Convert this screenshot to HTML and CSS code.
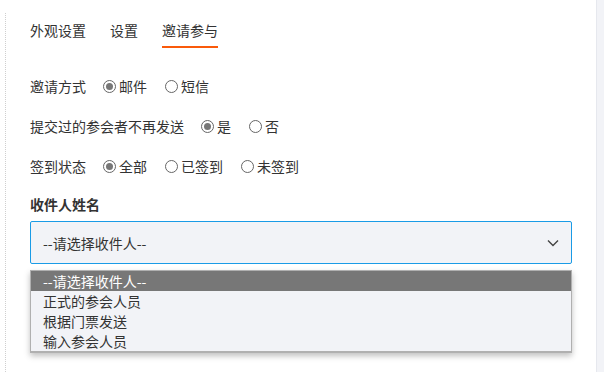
FILE: index.html
```html
<!DOCTYPE html>
<html lang="zh">
<head>
<meta charset="utf-8">
<link rel="stylesheet" href="styles.css">
</head>
<body>
<div class="main">
  <div class="tabs">
    <span class="tab">外观设置</span>
    <span class="tab">设置</span>
    <span class="tab active">邀请参与</span>
  </div>
  <div class="row">
    <span class="label">邀请方式</span>
    <span class="opt"><i class="radio on"></i>邮件</span>
    <span class="opt"><i class="radio"></i>短信</span>
  </div>
  <div class="row">
    <span class="label">提交过的参会者不再发送</span>
    <span class="opt"><i class="radio on"></i>是</span>
    <span class="opt"><i class="radio"></i>否</span>
  </div>
  <div class="row">
    <span class="label">签到状态</span>
    <span class="opt"><i class="radio on"></i>全部</span>
    <span class="opt"><i class="radio"></i>已签到</span>
    <span class="opt"><i class="radio"></i>未签到</span>
  </div>
  <div class="field-title">收件人姓名</div>
  <div class="select">
    <span>--请选择收件人--</span>
    <svg class="chev" width="12" height="8" viewBox="0 0 12 8"><path d="M1 1.5 L6 6.5 L11 1.5" fill="none" stroke="#444" stroke-width="1.4"/></svg>
  </div>
  <div class="list">
    <div class="item sel">--请选择收件人--</div>
    <div class="item">正式的参会人员</div>
    <div class="item">根据门票发送</div>
    <div class="item">输入参会人员</div>
  </div>
</div>
<div class="side"></div>
</body>
</html>
```
FILE: styles.css
```css
html, body { margin: 0; padding: 0; }
body {
  display: flex;
  height: 372px;
  overflow: hidden;
  background: #fff;
  font-family: "Noto Sans CJK SC", "Microsoft YaHei", sans-serif;
  font-size: 14px;
  color: #333;
}
.main {
  flex: 1;
  margin-left: 5px;
  margin-top: 13px;
  border-left: 1px dotted #cfcfcf;
  padding: 0 24px 0 24px;
}
.side {
  width: 7px;
  background: #f2f3f7;
  border-left: 1px solid #e6e8ee;
}
.tabs {
  display: flex;
  gap: 24px;
  margin-top: 7px;
}
.tab {
  line-height: 20px;
  padding-bottom: 6px;
  border-bottom: 2px solid transparent;
}
.tab.active { border-bottom-color: #fa5a0a; }
.row {
  display: flex;
  align-items: center;
  line-height: 20px;
  margin-top: 20px;
}
.tabs + .row { margin-top: 28px; }
.label { margin-right: 17px; }
.opt {
  display: flex;
  align-items: center;
  margin-right: 18px;
}
.radio {
  width: 11px;
  height: 11px;
  border: 1px solid #666;
  border-radius: 50%;
  margin-right: 3px;
  position: relative;
  box-sizing: content-box;
}
.radio.on::after {
  content: "";
  position: absolute;
  left: 2px; top: 2px;
  width: 7px; height: 7px;
  border-radius: 50%;
  background: #777;
}
.field-title {
  font-weight: bold;
  line-height: 20px;
  margin-top: 18px;
}
.select {
  margin-top: 7px;
  height: 41px;
  border: 1px solid #1a9be6;
  border-radius: 2px;
  background: #f2f3f7;
  display: flex;
  align-items: center;
  justify-content: space-between;
  padding: 0 12px 0 12px;
}
.list {
  margin-top: 6px;
  border: 1px solid #b0b0b0;
  border-bottom: 2px solid #b0b0b0;
  background: #f2f3f7;
  box-shadow: 0 3px 6px rgba(0,0,0,0.25);
}
.item {
  height: 20px;
  line-height: 20px;
  padding-left: 12px;
}
.item.sel {
  background: #777;
  color: #fff;
}
```
